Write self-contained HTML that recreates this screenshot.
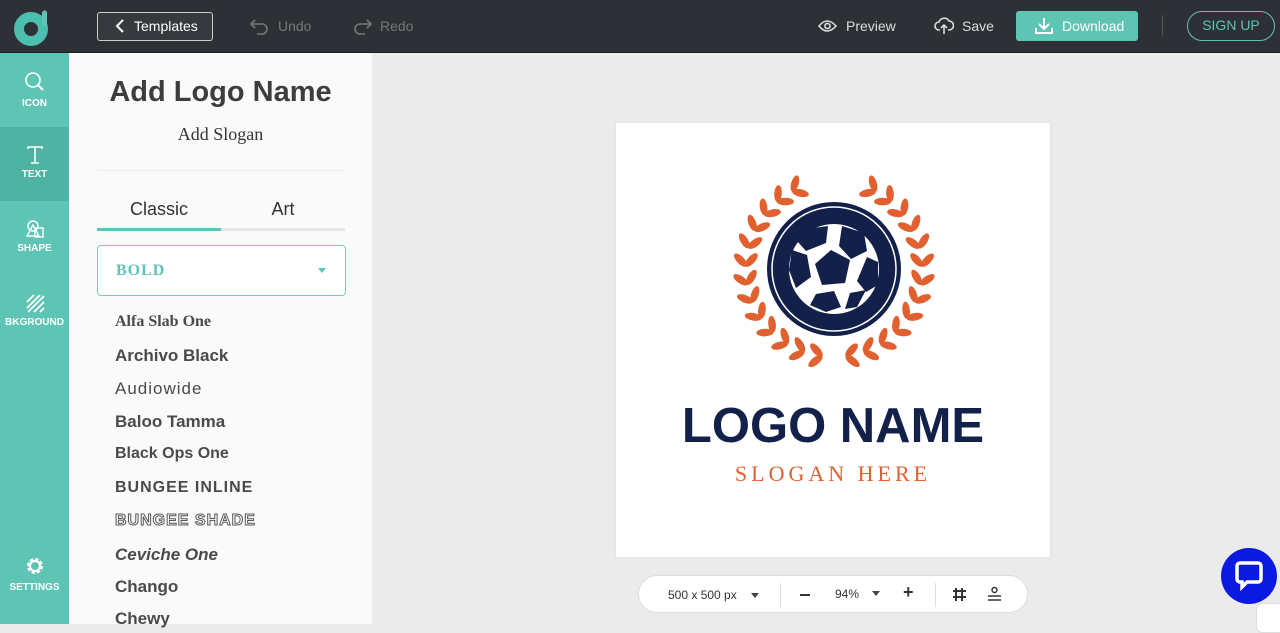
<!DOCTYPE html>
<html><head><meta charset="utf-8"><style>
*{margin:0;padding:0;box-sizing:border-box}
body{width:1280px;height:624px;overflow:hidden;font-family:"Liberation Sans",sans-serif;background:#ebebeb;position:relative}
.top{position:absolute;left:0;top:0;width:1280px;height:53px;background:#2d3035;border-bottom:1px solid #1d1f22}
.abs{position:absolute}
.side{position:absolute;left:0;top:53px;width:69px;height:571px;background:#5ec4b4}
.si{position:absolute;left:0;width:69px;text-align:center;color:#fff;font-size:10px;font-weight:bold}
.panel{position:absolute;left:69px;top:53px;width:303px;height:571px;background:#fafafa}
.f{position:absolute;left:46px;font-weight:bold;color:#4a4a4a;font-size:17px;white-space:nowrap}
</style></head><body>
<div class="top">
 <svg class="abs" style="left:14px;top:8px" width="36" height="38" viewBox="0 0 36 38"><circle cx="17" cy="21" r="12" fill="none" stroke="#4cbfae" stroke-width="10"/><path d="M28 4 L31 2 L33 4 V18 H28Z" fill="#5ec4b4"/></svg>
 <div class="abs" style="left:97px;top:12px;width:116px;height:29px;border:1px solid #ccc;border-radius:3px;background:#36393e;color:#fff;font-size:14px;line-height:27px;padding-left:36px">Templates</div>
 <svg class="abs" style="left:115px;top:19px" width="10" height="14"><path d="M8 1 L2 7 L8 13" fill="none" stroke="#fff" stroke-width="2"/></svg>
 <svg class="abs" style="left:250px;top:17px" width="20" height="18"><path d="M5 3 L1 7 L5 11 M1 7 H12 A5 5 0 0 1 12 17 H7" fill="none" stroke="#777" stroke-width="1.6"/></svg>
 <div class="abs" style="left:278px;top:18px;color:#777;font-size:14px">Undo</div>
 <svg class="abs" style="left:352px;top:17px" width="20" height="18"><path d="M15 3 L19 7 L15 11 M19 7 H8 A5 5 0 0 0 8 17 H13" fill="none" stroke="#777" stroke-width="1.6"/></svg>
 <div class="abs" style="left:380px;top:18px;color:#777;font-size:14px">Redo</div>
 <svg class="abs" style="left:818px;top:19px" width="19" height="14"><path d="M1 7 Q9 -3 18 7 Q9 17 1 7Z" fill="none" stroke="#ddd" stroke-width="1.6"/><circle cx="9.5" cy="7" r="2.6" fill="none" stroke="#ddd" stroke-width="1.6"/></svg>
 <div class="abs" style="left:846px;top:18px;color:#ddd;font-size:14px">Preview</div>
 <svg class="abs" style="left:934px;top:16px" width="20" height="19"><path d="M6 14 H5 A4 4 0 0 1 5 6 A5.5 5.5 0 0 1 15 5 A4.5 4.5 0 0 1 15 14 H14 M10 18 V9 M7 12 L10 9 L13 12" fill="none" stroke="#ddd" stroke-width="1.6"/></svg>
 <div class="abs" style="left:962px;top:18px;color:#ddd;font-size:14px">Save</div>
 <div class="abs" style="left:1016px;top:11px;width:122px;height:30px;background:#5ec4b4;border-radius:3px;color:#fff;font-size:14px;line-height:30px;padding-left:46px">Download</div>
 <svg class="abs" style="left:1035px;top:17px" width="18" height="17"><path d="M9 1 V11 M4 7 L9 12 L14 7 M1 11 V16 H17 V11" fill="none" stroke="#fff" stroke-width="2"/></svg>
 <div class="abs" style="left:1162px;top:15px;width:1px;height:21px;background:#555"></div>
 <div class="abs" style="left:1187px;top:11px;width:88px;height:30px;border:1.5px solid #5ec4b4;border-radius:15px;color:#5ec4b4;font-size:14px;line-height:27px;text-align:center">SIGN UP</div>
</div>
<div class="side">
 <div class="si" style="top:0;height:74px"><svg style="margin-top:18px" width="22" height="22"><circle cx="9" cy="9" r="7" fill="none" stroke="#fff" stroke-width="1.6"/><path d="M14 14 L19 19" stroke="#fff" stroke-width="2"/></svg><div style="margin-top:2px">ICON</div></div>
 <div class="si" style="top:74px;height:74px;background:#4fb3a3"><svg style="margin-top:18px" width="20" height="20"><path d="M3 4 V2 H17 V4 M10 2 V18 M6 18 H14" fill="none" stroke="#fff" stroke-width="1.6"/></svg><div style="margin-top:1px">TEXT</div></div>
 <div class="si" style="top:148px;height:74px"><svg style="margin-top:18px" width="20" height="20"><circle cx="8" cy="7" r="5" fill="none" stroke="#fff" stroke-width="1.4"/><path d="M8 6 L2 17 H14Z" fill="none" stroke="#fff" stroke-width="1.4"/><rect x="10" y="9" width="8" height="9" fill="none" stroke="#fff" stroke-width="1.4"/></svg><div style="margin-top:1px">SHAPE</div></div>
 <div class="si" style="top:222px;height:74px"><svg style="margin-top:18px" width="20" height="20"><path d="M2 9 L9 2 M2 15 L15 2 M3 19 L19 3 M9 19 L19 9 M15 19 L19 15" stroke="#fff" stroke-width="1.8"/></svg><div style="margin-top:1px">BKGROUND</div></div>
 <div class="si" style="top:503px"><svg width="20" height="20" viewBox="0 0 20 20"><circle cx="10" cy="10" r="6" fill="none" stroke="#fff" stroke-width="4" stroke-dasharray="3 1.7"/><circle cx="10" cy="10" r="5" fill="none" stroke="#fff" stroke-width="2"/></svg><div style="margin-top:3px">SETTINGS</div></div>
</div>
<div class="panel">
 <div class="abs" style="left:0;width:303px;top:23px;text-align:center;font-size:29px;font-weight:bold;color:#3d3d3d">Add Logo Name</div>
 <div class="abs" style="left:0;width:303px;top:71px;text-align:center;font-size:18px;font-family:'Liberation Serif',serif;color:#333">Add Slogan</div>
 <div class="abs" style="left:28px;top:117px;width:248px;height:1px;background:#eee"></div>
 <div class="abs" style="left:28px;top:146px;width:124px;text-align:center;font-size:18px;color:#333">Classic</div>
 <div class="abs" style="left:152px;top:146px;width:124px;text-align:center;font-size:18px;color:#333">Art</div>
 <div class="abs" style="left:28px;top:175px;width:248px;height:3px;background:#e6e6e6"></div>
 <div class="abs" style="left:28px;top:175px;width:124px;height:3px;background:#5ec4b4"></div>
 <div class="abs" style="left:28px;top:192px;width:249px;height:51px;border:1px solid #76cbbd;border-radius:4px;background:#fff"></div>
 <div class="abs" style="left:47px;top:209px;font-family:'Liberation Serif',serif;font-weight:bold;font-size:16px;color:#5ec4b4;letter-spacing:1px">BOLD</div>
 <div class="abs" style="left:249px;top:215px;border-left:4px solid transparent;border-right:4px solid transparent;border-top:5px solid #5ec4b4"></div>
 <div class="f" style="top:260px;font-family:'Liberation Serif',serif;font-size:16px">Alfa Slab One</div>
 <div class="f" style="top:293px">Archivo Black</div>
 <div class="f" style="top:326px;font-weight:normal;letter-spacing:1px">Audiowide</div>
 <div class="f" style="top:359px">Baloo Tamma</div>
 <div class="f" style="top:392px;font-size:16px">Black Ops One</div>
 <div class="f" style="top:426px;font-size:16px;letter-spacing:1px">BUNGEE INLINE</div>
 <div class="f" style="top:459px;font-size:16px;letter-spacing:1px;color:#fff;-webkit-text-stroke:1px #555">BUNGEE SHADE</div>
 <div class="f" style="top:492px;font-style:italic">Ceviche One</div>
 <div class="f" style="top:524px">Chango</div>
 <div class="f" style="top:556px">Chewy</div>
</div>
<div class="abs" style="left:616px;top:123px;width:434px;height:434px;background:#fff;box-shadow:0 0 3px rgba(0,0,0,.08)"></div>
<svg class="abs" style="left:720px;top:170px" width="230" height="210" viewBox="720 170 230 210" id="emb">
 <circle cx="834" cy="269" r="67" fill="#13214a"/>
 <circle cx="834" cy="269" r="62" fill="none" stroke="#fff" stroke-width="1.5"/>
 <circle cx="834" cy="269" r="45" fill="#fff"/>
 <polygon points="831,250 850,260 845,283 822,285 815,264" fill="#13214a"/>
 <polygon points="806,229 828,226 826,243 806,251 797,241" fill="#13214a"/>
 <polygon points="842,226 864,233 867,251 851,259 839,246" fill="#13214a"/>
 <polygon points="792,250 807,255 811,277 796,288 789,270" fill="#13214a"/>
 <polygon points="867,257 878,262 878,285 866,292 857,281" fill="#13214a"/>
 <polygon points="816,294 834,291 841,307 826,312 810,305" fill="#13214a"/>
 <polygon points="850,293 866,290 857,307 845,309" fill="#13214a"/>
</svg>
<div class="abs" style="left:616px;top:398px;width:434px;text-align:center;font-size:49px;font-weight:bold;color:#13214a">LOGO NAME</div>
<div class="abs" style="left:616px;top:461px;width:434px;text-align:center;font-size:22px;font-family:'Liberation Serif',serif;color:#e0602f;letter-spacing:4px">SLOGAN HERE</div>
<div class="abs" style="left:638px;top:575px;width:390px;height:38px;background:#fff;border:1px solid #ddd;border-radius:19px;font-size:12px;color:#333">
 <div class="abs" style="left:29px;top:12px">500 x 500 px</div>
 <div class="abs" style="left:112px;top:17px;border-left:4px solid transparent;border-right:4px solid transparent;border-top:5px solid #444"></div>
 <div class="abs" style="left:141px;top:7px;width:1px;height:24px;background:#ddd"></div>
 <div class="abs" style="left:161px;top:18px;width:10px;height:2px;background:#333"></div>
 <div class="abs" style="left:196px;top:11px">94%</div>
 <div class="abs" style="left:233px;top:15px;border-left:4px solid transparent;border-right:4px solid transparent;border-top:5px solid #444"></div>
 <div class="abs" style="left:264px;top:6px;font-size:18px;font-weight:bold">+</div>
 <div class="abs" style="left:296px;top:7px;width:1px;height:24px;background:#ddd"></div>
 <svg class="abs" style="left:313px;top:11px" width="15" height="15"><path d="M4 1V14M10 1V14M1 4H14M1 10H14" stroke="#333" stroke-width="2"/></svg>
 <svg class="abs" style="left:348px;top:10px" width="15" height="16"><circle cx="7.5" cy="4" r="2.5" fill="none" stroke="#333" stroke-width="1.4"/><path d="M1 10H14M1 14H14" stroke="#333" stroke-width="1.6"/></svg>
</div>
<div class="abs" style="left:1221px;top:548px;width:56px;height:56px;border-radius:50%;background:#0a1ae0"></div>
<svg class="abs" style="left:1235px;top:561px" width="28" height="30"><path d="M5 2 H23 A3 3 0 0 1 26 5 V18 A3 3 0 0 1 23 21 H12 L7 26 V21 H5 A3 3 0 0 1 2 18 V5 A3 3 0 0 1 5 2Z" fill="none" stroke="#fff" stroke-width="3.5"/></svg>
<div class="abs" style="left:1256px;top:603px;width:30px;height:30px;background:#fff;border:1px solid #ddd;border-radius:6px"></div>
<script>
var s=document.getElementById('emb'),ns='http://www.w3.org/2000/svg',cx=834,cy=269;
function leaf(x,y,rot){var e=document.createElementNS(ns,'ellipse');e.setAttribute('cx',x);e.setAttribute('cy',y);e.setAttribute('rx',8.5);e.setAttribute('ry',3.8);e.setAttribute('transform','rotate('+rot+' '+x+' '+y+')');e.setAttribute('fill','#e0602f');s.appendChild(e);}
for(var side=-1;side<=1;side+=2){
 for(var i=0;i<13;i++){
  var d=-62+i*12;
  var a=d*Math.PI/180, R=88;
  var sx=cx+side*R*Math.cos(a), sy=cy+R*Math.sin(a);
  var tang=Math.atan2(-Math.cos(a),Math.sin(a));
  var offs=[0.8,-0.7];
  for(var k=0;k<2;k++){
   var th=tang+offs[k];
   var dx=Math.cos(th),dy=Math.sin(th);
   var x=sx+side*dx*8,y=sy+dy*8;
   var deg=Math.atan2(dy,side*dx)*180/Math.PI;
   leaf(x,y,deg);
  }
 }
}
</script>
</body></html>
